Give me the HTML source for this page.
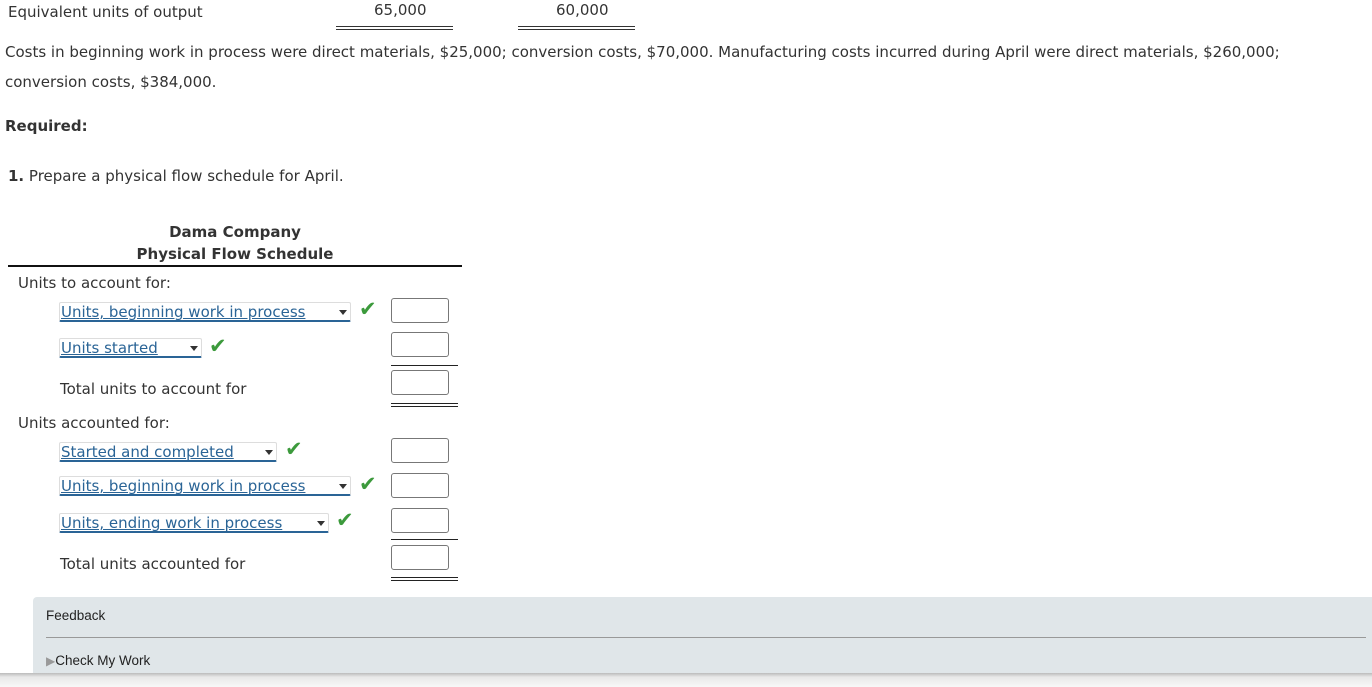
<!DOCTYPE html>
<html><head><style>
body{margin:0;width:1372px;height:687px;background:#fff;position:relative;overflow:hidden;font-family:"DejaVu Sans","Liberation Sans",sans-serif;font-size:15px;color:#333}
.a{position:absolute;white-space:nowrap}
.sel{position:absolute;color:#2a6496;font-size:15px;line-height:18px;box-sizing:border-box;height:20px;padding-left:1px;border-bottom:2px solid #2a6496;border-top:1px solid #ddd;border-left:1px solid #ddd;border-right:1px solid #ddd;border-radius:2px}
.sel span.t{text-decoration:underline}
.sel i{position:absolute;right:3px;top:7px;width:0;height:0;border-left:4px solid transparent;border-right:4px solid transparent;border-top:5px solid #333}
.ck{position:absolute;color:#3c9a3c;font-size:21px;font-weight:bold}
.box{position:absolute;left:391px;width:58px;height:25px;border:1px solid #777;border-radius:3px;box-sizing:border-box}
.ln{position:absolute;left:391px;width:67px;border-top:1px solid #222}
.dl{position:absolute;left:391px;width:67px;height:2px;border-top:1px solid #222;border-bottom:1px solid #222}
</style></head><body>
<div class="a" style="left:8px;top:3px">Equivalent units of output</div>
<div class="a" style="left:374px;top:1px">65,000</div>
<div class="a" style="left:556px;top:1px">60,000</div>
<div class="a" style="left:336px;top:26px;width:117px;height:2px;border-top:1px solid #333;border-bottom:1px solid #333"></div>
<div class="a" style="left:518px;top:26px;width:117px;height:2px;border-top:1px solid #333;border-bottom:1px solid #333"></div>
<div class="a" style="left:5px;top:43px">Costs in beginning work in process were direct materials, $25,000; conversion costs, $70,000. Manufacturing costs incurred during April were direct materials, $260,000;</div>
<div class="a" style="left:5px;top:73px">conversion costs, $384,000.</div>
<div class="a" style="left:5px;top:117px;font-weight:bold">Required:</div>
<div class="a" style="left:8px;top:167px"><b>1.</b> Prepare a physical flow schedule for April.</div>
<div class="a" style="left:8px;top:221px;width:454px;text-align:center;font-weight:bold;line-height:22px">Dama Company<br>Physical Flow Schedule</div>
<div class="a" style="left:8px;top:265px;width:454px;border-top:2px solid #111"></div>
<div class="a" style="left:18px;top:274px">Units to account for:</div>
<div class="sel" style="left:59px;top:302px;width:292px"><span class="t">Units, beginning work in process</span><i></i></div><div class="ck" style="left:359px;top:297px">✔</div>
<div class="box" style="top:298px"></div>
<div class="sel" style="left:59px;top:338px;width:143px"><span class="t">Units started</span><i></i></div><div class="ck" style="left:209px;top:334px">✔</div>
<div class="box" style="top:332px"></div>
<div class="ln" style="top:365px"></div>
<div class="a" style="left:60px;top:380px">Total units to account for</div>
<div class="box" style="top:370px"></div>
<div class="dl" style="top:403px"></div>
<div class="a" style="left:18px;top:414px">Units accounted for:</div>
<div class="sel" style="left:59px;top:442px;width:218px"><span class="t">Started and completed</span><i></i></div><div class="ck" style="left:285px;top:437px">✔</div>
<div class="box" style="top:438px"></div>
<div class="sel" style="left:59px;top:476px;width:292px"><span class="t">Units, beginning work in process</span><i></i></div><div class="ck" style="left:359px;top:472px">✔</div>
<div class="box" style="top:473px"></div>
<div class="sel" style="left:59px;top:513px;width:270px"><span class="t">Units, ending work in process</span><i></i></div><div class="ck" style="left:336px;top:508px">✔</div>
<div class="box" style="top:508px"></div>
<div class="ln" style="top:539px"></div>
<div class="a" style="left:60px;top:555px">Total units accounted for</div>
<div class="box" style="top:545px"></div>
<div class="dl" style="top:577px"></div>
<div class="a" style="left:33px;top:597px;width:1339px;height:90px;background:#e0e6e9;border-radius:4px 0 0 0"></div>
<div class="a" style="left:46px;top:608px;font-family:'Liberation Sans',sans-serif;font-size:13.5px;color:#222">Feedback</div>
<div class="a" style="left:46px;top:637px;width:1320px;border-top:1px solid #999"></div>
<div class="a" style="left:46px;top:653px;font-family:'Liberation Sans',sans-serif;font-size:13.5px;color:#222"><span style="color:#999;font-size:12px">▶</span>Check My Work</div>
<div class="a" style="left:0;top:673px;width:1372px;height:14px;background:linear-gradient(#bbb,#e8e8e8 4px,#f8f8f8)"></div>
</body></html>
